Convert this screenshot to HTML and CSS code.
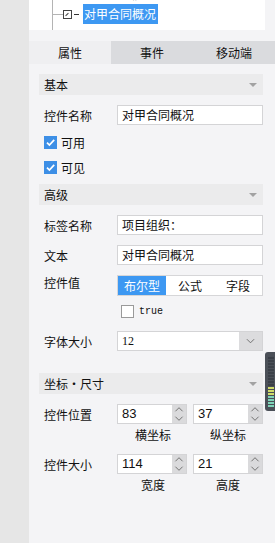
FILE: index.html
```html
<!DOCTYPE html>
<html lang="zh">
<head>
  <meta charset="UTF-8">
  <title>控件属性</title>
  <meta name="viewport" content="width=device-width,initial-scale=1.0">
  <link rel="stylesheet" href="styles.css">
</head>
<body>
  <div id="app">
    <div id="rail"></div>
    <div id="panel">
      <div id="tree">
        <div class="node">
          <span class="link"></span>
          <span class="node-icon"></span><span class="dash"></span>
          <span class="node-text">项目基本信息</span>
        </div>
        <div class="node">
          <span class="link"></span>
          <span class="node-icon"><span class="diag"></span></span><span class="dash"></span>
          <span class="node-text selected">对甲合同概况</span>
        </div>
        <div class="node">
          <span class="link"></span>
          <span class="node-icon wide"></span>
          <span class="node-text">1.1_1a</span>
        </div>
      </div>

      <div id="tabs">
        <div class="tab active">属性</div>
        <div class="tab">事件</div>
        <div class="tab">移动端</div>
      </div>

      <div id="props">
        <div class="group-head">基本<span class="caret"></span></div>
        <div class="field first">
          <label>控件名称</label>
          <div class="text-box">对甲合同概况</div>
        </div>
        <div class="check-row first"><span class="check on"><svg viewBox="0 0 13 13"><path d="M3 6.6l2.4 2.4L10.2 3.8" /></svg></span>可用</div>
        <div class="check-row"><span class="check on"><svg viewBox="0 0 13 13"><path d="M3 6.6l2.4 2.4L10.2 3.8" /></svg></span>可见</div>

        <div class="group-head second">高级<span class="caret"></span></div>
        <div class="field first">
          <label>标签名称</label>
          <div class="text-box">项目组织：</div>
        </div>
        <div class="field">
          <label>文本</label>
          <div class="text-box">对甲合同概况</div>
        </div>
        <div class="field top">
          <label>控件值</label>
          <div class="segment">
            <span class="seg active">布尔型</span>
            <span class="seg">公式</span>
            <span class="seg">字段</span>
          </div>
        </div>
        <div class="bool-row"><span class="check off"></span><span class="mono">true</span></div>
        <div class="field size">
          <label>字体大小</label>
          <div class="select">
            <span class="select-value">12</span>
            <span class="select-btn"><svg viewBox="0 0 10 6"><path d="M1 1l4 4 4-4" /></svg></span>
          </div>
        </div>

        <div class="group-head third">坐标・尺寸<span class="caret"></span></div>
        <div class="field first">
          <label>控件位置</label>
          <div class="pair">
            <div class="spin"><span class="spin-value">83</span><span class="spin-btns"><svg viewBox="0 0 14 20"><path d="M3 7l4-4 4 4M3 13l4 4 4-4" /></svg></span></div>
            <div class="spin"><span class="spin-value">37</span><span class="spin-btns"><svg viewBox="0 0 14 20"><path d="M3 7l4-4 4 4M3 13l4 4 4-4" /></svg></span></div>
          </div>
        </div>
        <div class="sub-labels"><span>横坐标</span><span>纵坐标</span></div>
        <div class="field after-sub">
          <label>控件大小</label>
          <div class="pair">
            <div class="spin"><span class="spin-value">114</span><span class="spin-btns"><svg viewBox="0 0 14 20"><path d="M3 7l4-4 4 4M3 13l4 4 4-4" /></svg></span></div>
            <div class="spin"><span class="spin-value">21</span><span class="spin-btns"><svg viewBox="0 0 14 20"><path d="M3 7l4-4 4 4M3 13l4 4 4-4" /></svg></span></div>
          </div>
        </div>
        <div class="sub-labels"><span>宽度</span><span>高度</span></div>
      </div>
    </div>
    <div id="meter"></div>
  </div>
</body>
</html>
```

FILE: styles.css
```css
html, body {margin:0; padding:0; width:100%; height:100%; overflow:hidden; background:#f4f4f6; color:#1a1a1a; font-family:"Noto Sans CJK SC","Liberation Sans",sans-serif; font-size:12px;}
#app {display:flex; height:543px; position:relative;}
#rail {width:29px; flex:none; background:#e6e6e6;}
#panel {flex:1; display:flex; flex-direction:column; background:#f4f4f6;}

#tree {height:30px; margin-right:10px; overflow:hidden; background:linear-gradient(#b4b4b4,#b4b4b4) 23px 0/1px 100% no-repeat, #fff;}
.node {display:flex; align-items:center; height:20px; white-space:nowrap;}
.node:first-child {margin-top:-16px;}
.link {width:10px; height:1px; margin-left:24px; background:#b4b4b4;}
.node-icon {width:7px; height:7px; margin-left:0; border:1px solid #444; position:relative; flex:none;}
.node-icon.wide {width:14px; height:7px; border-color:#999; background:#ddd;}
.diag {position:absolute; left:1px; top:3px; width:4px; height:1px; background:#444; transform:rotate(-45deg);}
.dash {width:5px; height:1px; margin-left:2px; background:#333;}
.node-text {margin-left:4px; line-height:20px; font-size:12px; color:#222;}
.node-icon.wide + .node-text {margin-left:3px;}
.node-text.selected {background:#3d98f2; color:#fff; padding:0 2px 0 1px;}

#tabs {display:flex; margin-top:11px; height:23px;}
.tab {flex:1; display:flex; align-items:center; justify-content:center; background:#dadbde; font-size:12px; color:#111;}
.tab.active {background:#efeff1;}

#props {padding:0 12px 0 10px;}
.group-head {display:flex; align-items:center; justify-content:space-between; height:21px; margin-top:10px; padding:0 6px 0 5px; background:#ebebec; font-size:12px; color:#111;}
.group-head.second {margin-top:4px;}
.group-head.third {margin-top:22px;}
.caret {width:0; height:0; border-left:4px solid transparent; border-right:4px solid transparent; border-top:4px solid #a2a2a2;}

.field {display:grid; grid-template-columns:78px 1fr; align-items:center; margin-top:10px;}
.field label {padding-left:5px; font-size:12px; color:#111;}
.field.top {align-items:start;}
.field.top label {line-height:16px;}
.field.size {margin-top:13px;}
.field.after-sub {margin-top:12px;}
.text-box {height:18px; line-height:18px; padding:0 4px; background:#fff; border:1px solid #d4d4d6; font-size:12px; color:#111;}

.check-row {display:flex; align-items:center; height:25px; padding-left:5px; font-size:12px; color:#111;}
.check-row.first {margin-top:5px;}
.check {width:13px; height:13px; margin-right:4px; flex:none; box-sizing:border-box;}
.check.on {background:#3d8fe6;}
.check svg {display:block; width:13px; height:13px;}
.check path {fill:none; stroke:#fff; stroke-width:1.7;}
.check.off {border:1px solid #9a9a9a; background:#fff; margin-right:5px;}

.segment {display:flex; height:19px; border:1px solid #d6d6d8; background:#fff;}
.seg {flex:1; display:flex; align-items:center; justify-content:center; font-size:12px; color:#111;}
.seg.active {background:#3d98f2; color:#fff;}

.bool-row {display:flex; align-items:center; height:13px; margin-top:9px; padding-left:82px;}
.mono {font-family:"Liberation Mono",monospace; font-size:10px; color:#111;}

.select {display:flex; height:18px; background:#fff; border:1px solid #d4d4d6;}
.select-value {flex:1; padding-left:4px; line-height:18px; font-family:"Liberation Serif",serif; font-size:12px; color:#111;}
.select-btn {width:23px; background:#dcdcde; display:flex; align-items:center; justify-content:center;}
.select-btn svg {width:9px; height:6px;}
.select-btn path, .spin-btns path {fill:none; stroke:#666; stroke-width:1;}

.pair {display:flex; justify-content:space-between;}
.spin {display:flex; width:70px; height:20px; box-sizing:border-box; border:1px solid #d4d4d6; background:#fff;}
.spin-value {flex:1; padding-left:4px; line-height:18px; font-family:"Liberation Sans",sans-serif; font-size:13px; color:#111;}
.spin-btns {width:14px; background:#dadadc;}
.spin-btns svg {display:block; width:14px; height:18px;}

.sub-labels {display:flex; justify-content:space-between; padding-left:79px; margin-top:4px; line-height:14px;}
.sub-labels span {width:70px; text-align:center; font-size:12px; color:#111;}

#meter {position:absolute; left:265px; top:352px; width:14px; height:59px; border-radius:3px; background:
  repeating-linear-gradient(#4a4f57 0 1px, transparent 1px 3px) 3px 4px/6px 51px no-repeat,
  linear-gradient(#3b4048 0 60%, #d0dc6a 60% 78%, #7ed3b8 78% 100%) 3px 4px/6px 51px no-repeat,
  #4b5058;}
```
